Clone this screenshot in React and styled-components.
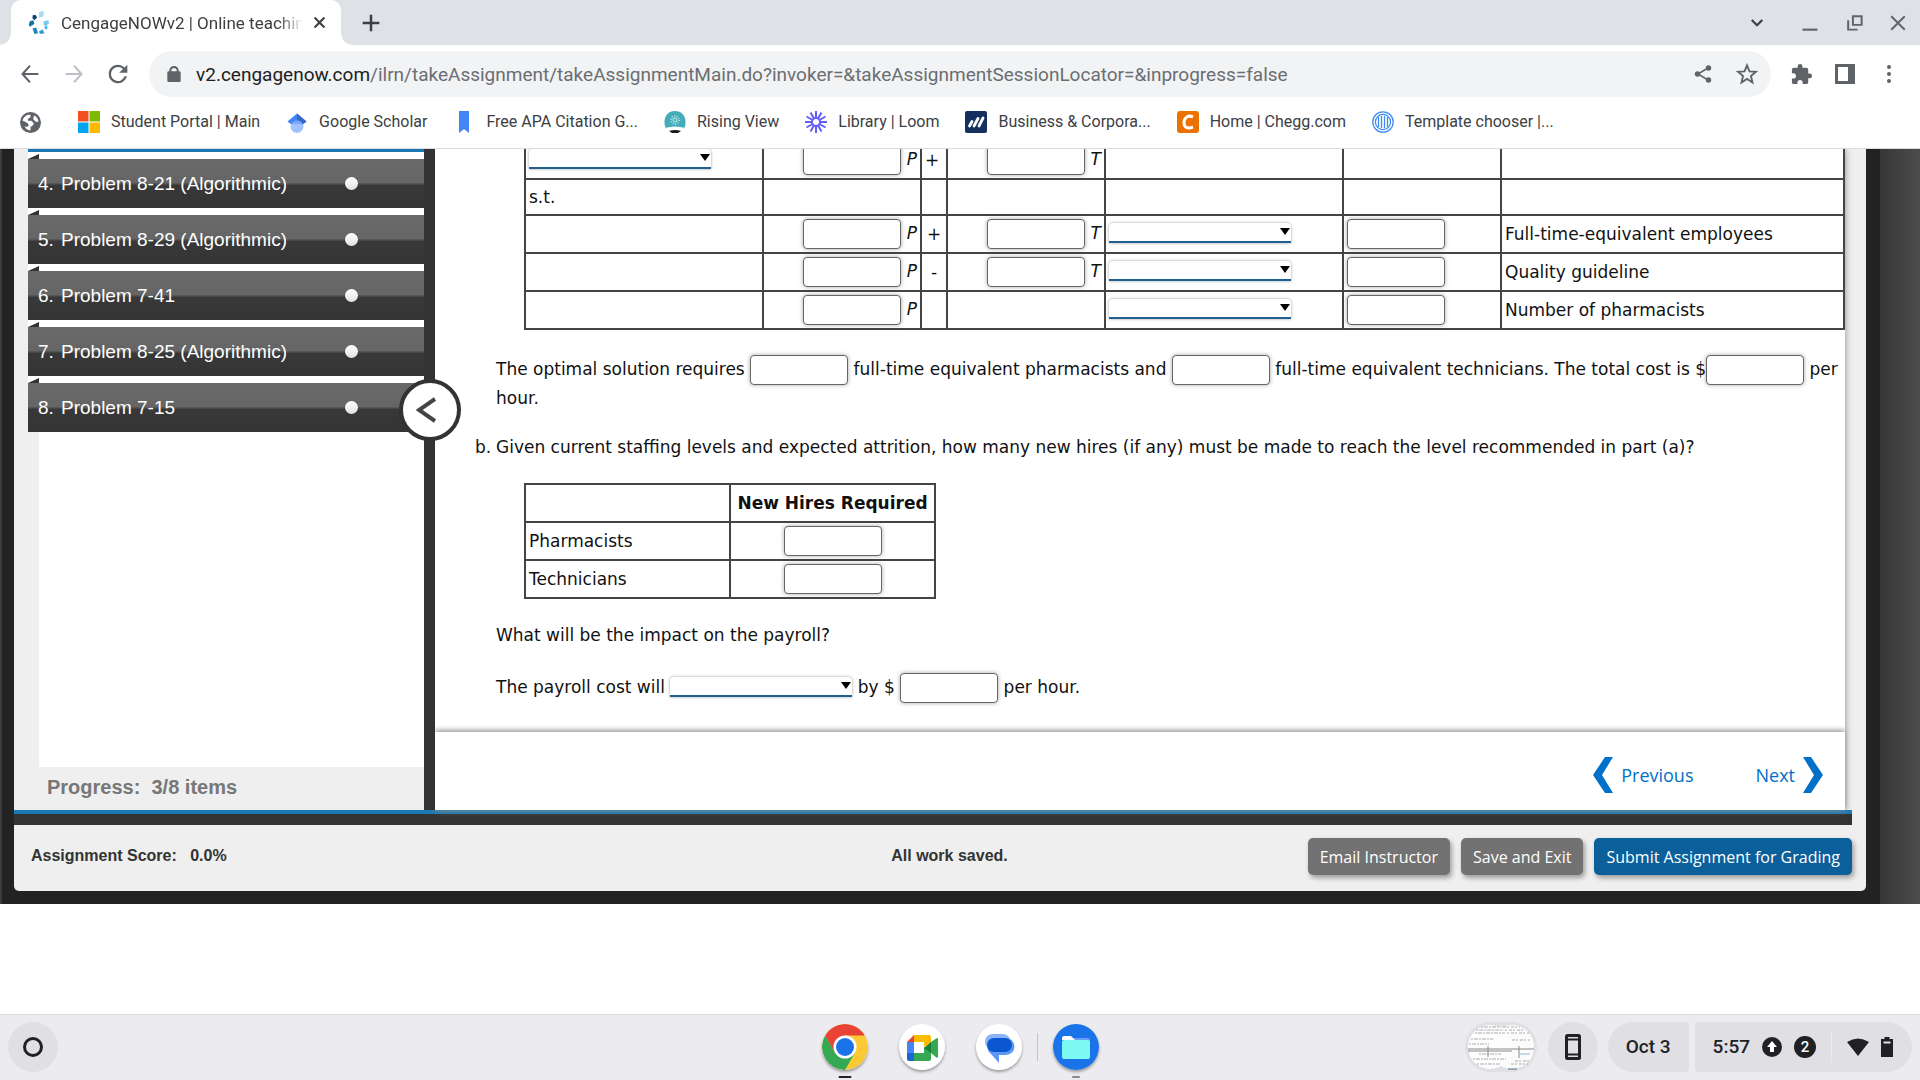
import React from 'react'
import styled, { createGlobalStyle } from 'styled-components'

const GlobalStyle = createGlobalStyle`
  * { box-sizing: border-box; }
  body { margin: 0; background: #fff; font-family: "DejaVu Sans", Verdana, sans-serif; }
  button { border: 0; padding: 0; background: none; font: inherit; color: inherit; }
  a { color: inherit; text-decoration: none; }
  svg { display: block; }
`

const Page = styled.div`
  min-height: 100vh;
  display: flex;
  flex-direction: column;
  overflow: hidden;
`

/* browser header */

const Browser = styled.header`
  position: relative;
  z-index: 5;
  background: #fff;
  border-bottom: 1px solid #dadce0;
  font-family: Roboto, sans-serif;
  color: #3c4043;
`

const TabStrip = styled.div`
  height: 45px;
  padding-left: 11px;
  background: #dee1e6;
  display: flex;
  align-items: center;
`

const Tab = styled.div`
  position: relative;
  width: 330px;
  height: 45px;
  padding: 0 14px 0 17px;
  display: flex;
  align-items: center;
  gap: 11px;
  background: #fff;
  border-radius: 10px 10px 0 0;

  svg { flex: none; }

  &::before,
  &::after {
    content: "";
    position: absolute;
    bottom: 0;
    width: 11px;
    height: 11px;
  }
  &::before {
    left: -11px;
    background: radial-gradient(circle at 0 0, #dee1e6 10px, #fff 11px);
  }
  &::after {
    right: -11px;
    background: radial-gradient(circle at 100% 0, #dee1e6 10px, #fff 11px);
  }
`

const TabTitle = styled.span`
  flex: 1;
  min-width: 0;
  margin-right: -8px;
  white-space: nowrap;
  font-size: 17px;
  line-height: 24px;
  mask-image: linear-gradient(to right, #000 88%, transparent 98%);
`

const IconButton = styled.button`
  width: ${p => p.$w || 44}px;
  height: 44px;
  flex: none;
  display: flex;
  align-items: center;
  justify-content: center;
  color: ${p => p.$color || '#5f6368'};
`

const WindowButtons = styled.div`
  margin-left: auto;
  display: flex;
`

const Toolbar = styled.div`
  height: 58px;
  padding: 0 9px 0 8px;
  display: flex;
  align-items: center;
`

const Omnibox = styled.div`
  flex: 1;
  min-width: 0;
  height: 46px;
  margin: 0 8px 0 9px;
  padding: 0 2px 0 17px;
  display: flex;
  align-items: center;
  background: #f1f3f4;
  border-radius: 23px;
  color: #5f6368;
`

const Url = styled.div`
  flex: 1;
  min-width: 0;
  margin-left: 14px;
  padding-top: 2px;
  overflow: hidden;
  white-space: nowrap;
  font-size: 19px;
  line-height: 28px;
  color: #6b6e72;

  b {
    font-weight: 400;
    color: #202124;
  }
`

const Bookmarks = styled.nav`
  height: 45px;
  padding: 0 20px 7px;
  display: flex;
  align-items: center;
  gap: 26px;
`

const Bookmark = styled.a`
  display: flex;
  align-items: center;
  gap: 11px;
  font-size: 16px;
  line-height: 24px;
  white-space: nowrap;

  svg { flex: none; }
  &:first-child { margin-right: 11px; }
`

/* assignment page */

const Desk = styled.div`
  display: flex;
`

const Shell = styled.div`
  flex: 1;
  min-width: 0;
  padding: 0 14px 13px 12px;
  border-left: 2px solid #3a3a3a;
  background: #222;
`

const DeskEdge = styled.div`
  width: 40px;
  background: linear-gradient(to right, #363636, #4c4c4c);
`

const Panel = styled.div`
  padding-right: 14px;
  background: #efefef;
  border-radius: 0 0 5px 5px;
`

const Work = styled.div`
  display: flex;
`

const Sidebar = styled.aside`
  width: 410px;
  flex: none;
  display: flex;
  flex-direction: column;
  font-family: "Liberation Sans", Arial, sans-serif;
`

const ProblemList = styled.ul`
  list-style: none;
  margin: -1px 0 0 14px;
  padding: 0;
  border-top: 4px solid #1a79b4;
  background: #fff;
`

const Problem = styled.li`
  padding-top: 7px;
  position: relative;

  &::before {
    content: "";
    position: absolute;
    top: 2px;
    left: 0;
    width: 11px;
    height: 5px;
    background: #333;
    clip-path: polygon(0 100%, 100% 0, 100% 100%);
  }
`

const ProblemLink = styled.a`
  height: 49px;
  padding: 0 66px 0 10px;
  display: flex;
  align-items: center;
  background: linear-gradient(#6a6a6a, #656565 48%, #383838 54%, #343434);
  color: #fff;
  font-size: 19px;
`

const ProblemNumber = styled.span`
  width: 23px;
`

const Dot = styled.i`
  width: 13px;
  height: 13px;
  margin-left: auto;
  border-radius: 50%;
  background: linear-gradient(#fff, #e2e2e2);
`

const ListFill = styled.div`
  flex: 1;
  margin-left: 25px;
  background: #fff;
`

const Progress = styled.div`
  height: 43px;
  padding-left: 33px;
  font-size: 20px;
  font-weight: bold;
  line-height: 40px;
  color: #777;
  white-space: pre;
`

const Divider = styled.div`
  position: relative;
  z-index: 2;
  width: 11px;
  flex: none;
  background: #333;
`

const Collapse = styled.button`
  && {
    position: absolute;
    top: 230px;
    left: -25px;
    width: 62px;
    height: 62px;
    padding-right: 8px;
    display: flex;
    align-items: center;
    justify-content: center;
    border: 4px solid #333;
    border-radius: 50%;
    background: #fff;
  }
`

const Main = styled.main`
  flex: 1;
  min-width: 0;
  margin-right: 7px;
  background: #fff;
  box-shadow: 0 0 7px #888;
  font-size: 17px;
  line-height: 27px;
  color: #111;
`

const Question = styled.div`
  padding: 0 0 29px 61px;
`

const Text = styled.p`
  margin: 0;
  padding: ${p => p.$pad || '0'};
`

const Part = styled.div`
  display: flex;
  margin-left: -21px;
  padding: 22px 0;
`

const PartLabel = styled.span`
  width: 21px;
`

const Grid = styled.table`
  border-collapse: collapse;
  table-layout: fixed;

  td, th {
    height: 38px;
    padding: 0 3px;
    border: 2px solid #444;
    text-align: left;
    white-space: nowrap;
  }
  th { text-align: center; }
`

const ModelTable = styled(Grid)`
  width: calc(100% - 28px);
  margin: -9px 0 0 28px;
`

const SubjectToRow = styled.tr`
  && td { height: 36px; }
`

const HiresTable = styled(Grid)`
  width: 412px;
  margin: 0 0 0 28px;
`

const Cell = styled.td`
  && { text-align: ${p => p.$align || 'left'}; }
`

const Col = styled.col`
  width: ${p => p.$w}px;
`

const Blank = styled.input`
  width: 98px;
  height: 30px;
  margin: 0;
  vertical-align: middle;
  border: 1px solid #666;
  border-radius: 4px;
  background: #fff;
  box-shadow: 0 0 4px rgba(0, 0, 0, 0.35);
`

const SelectBox = styled.span`
  position: relative;
  display: inline-block;
  vertical-align: middle;
  height: 20px;
  margin-bottom: 3px;

  svg {
    position: absolute;
    right: 1px;
    top: 5px;
    pointer-events: none;
  }
`

const Select = styled.select`
  appearance: none;
  display: block;
  width: 182px;
  height: 20px;
  border: 0;
  border-bottom: 2px solid #1f6091;
  border-radius: 4px 4px 0 0;
  background: #fff;
  box-shadow: 0 0 3px rgba(0, 0, 0, 0.4);
`

const Pager = styled.nav`
  height: 78px;
  padding: 8px 22px 0;
  display: flex;
  align-items: center;
  justify-content: flex-end;
  gap: 62px;
  box-shadow: 0 -2px 5px #999;
  font-family: "Open Sans", sans-serif;
  font-size: 18px;
  color: #0070c9;
`

const PagerLink = styled.a`
  display: flex;
  align-items: center;
  gap: 8px;
`

const BottomBar = styled.div`
  height: 15px;
  border-top: 4px solid #1a79b4;
  background: #333;
`

const Footer = styled.footer`
  height: 66px;
  padding-left: 17px;
  display: grid;
  grid-template-columns: 1fr auto 1fr;
  align-items: center;
  font: bold 16px/20px "Liberation Sans", Arial, sans-serif;
  color: #333;
`

const Score = styled.span`
  white-space: pre;
  padding-bottom: 5px;
`

const SaveStatus = styled(Score)`
  padding-left: 16px;
`

const Actions = styled.div`
  display: flex;
  justify-content: flex-end;
  gap: 11px;
  padding-bottom: 3px;
`

const ActionButton = styled.button`
  && {
    height: 37px;
    padding: 0 12px;
    border-radius: 5px;
    background: ${p => (p.$primary ? '#0b5f9b' : '#727272')};
    color: #fff;
    font: 16px "Open Sans", sans-serif;
    box-shadow: 2px 3px 5px rgba(0, 0, 0, 0.35);
    white-space: nowrap;
  }
`

/* system shelf */

const Shelf = styled.footer`
  position: relative;
  margin-top: auto;
  height: 66px;
  padding: 0 8px 2px;
  display: flex;
  align-items: center;
  justify-content: space-between;
  border-top: 1px solid #dcdbdf;
  background: #ecebef;
  font-family: Roboto, sans-serif;
`

const RoundButton = styled.button`
  && {
    width: 50px;
    height: 50px;
    display: flex;
    align-items: center;
    justify-content: center;
    border-radius: 50%;
    background: #e0dfe4;
  }
`

const Apps = styled.div`
  display: flex;
  align-items: center;
  gap: 31px;
`

const ShelfSide = styled.div`
  flex: 1;
  display: flex;
  align-items: center;
  justify-content: ${p => (p.$end ? 'flex-end' : 'flex-start')};
  gap: 6px;
`

const AppButton = styled.button`
  position: relative;
  width: 46px;
  height: 46px;

  svg {
    border-radius: 50%;
    box-shadow: 0 2px 3px rgba(0, 0, 0, 0.35);
  }

  &::after {
    content: "";
    display: ${p => (p.$mark ? 'block' : 'none')};
    position: absolute;
    top: 52px;
    left: 50%;
    width: ${p => (p.$mark === 'active' ? 13 : 8)}px;
    height: 2px;
    transform: translateX(-50%);
    border-radius: 1px;
    background: ${p => (p.$mark === 'active' ? '#202124' : '#8a8a8d')};
  }
`

const AppsRule = styled.i`
  width: 1px;
  height: 28px;
  margin: 0 -16px;
  background: #c5c4c9;
`

const TrayButton = styled.button`
  && {
    height: 50px;
    display: flex;
    align-items: center;
    gap: 12px;
    padding: ${p => p.$pad};
    margin-left: ${p => p.$gap || 0}px;
    border-radius: ${p => p.$radius};
    background: #e0dfe4;
    color: #202124;
    font-size: 19px;
    font-weight: 500;
  }
`

const TrayRule = styled.i`
  width: 1px;
  height: 30px;
  margin: 0 3px;
  background: #eceaf0;
`

const Badge = styled.span`
  width: 22px;
  height: 22px;
  border-radius: 50%;
  background: #202124;
  color: #fff;
  font-size: 15px;
  line-height: 22px;
  text-align: center;
`

const Stroke = ({ d, size = 24, w = 2, color = 'currentColor' }) => (
  <svg width={size} height={size} viewBox="0 0 24 24" fill="none" stroke={color} strokeWidth={w}>
    <path d={d} />
  </svg>
)

const Solid = ({ d, size = 24 }) => (
  <svg width={size} height={size} viewBox="0 0 24 24" fill="currentColor">
    <path d={d} />
  </svg>
)

const CengageIcon = () => (
  <svg width="22" height="24" viewBox="0 0 22 26">
    <path d="M11 1l5-1v6l-5 1z" fill="#a8dcf0" />
    <path d="M4 5l3-1 2 3-3 3-2-2z" fill="#0b3f73" />
    <path d="M0 15l1-4 4-1 1 4-5 3z" fill="#1273a8" />
    <path d="M4 19l4-1 2 6-4 1z" fill="#1d86bd" />
    <path d="M11 22l4-2 2 4-5 1z" fill="#2e9ed2" />
    <path d="M16 11l5-1 1 3-4 4-2-2z" fill="#7bcbea" />
    <path d="M17 17l3-1v4l-3-1z" fill="#48b0dd" />
  </svg>
)

const GlobeIcon = () => (
  <svg width="21" height="21" viewBox="0 0 24 24">
    <circle cx="12" cy="12" r="12" fill="#5f6368" />
    <path d="M3 10c0-3 3-6 6-7h3v3l-3 2v2h4l3 3-2 3-2 1v4c-3 0-6-2-7-5l2 1 3-1-1-3-3-2z" fill="#fff" />
    <path d="M16 4c3 1 5 4 5 7h-3l-3-3z" fill="#fff" />
  </svg>
)

const MicrosoftIcon = () => (
  <svg width="22" height="22" viewBox="0 0 22 22">
    <path d="M0 0h10.5v10.5H0z" fill="#f25022" />
    <path d="M11.500 0H22v10.500H11.500z" fill="#7fba00" />
    <path d="M0 11.500h10.500V22H0z" fill="#00a4ef" />
    <path d="M11.500 11.500H22V22H11.500z" fill="#ffb900" />
  </svg>
)

const ScholarIcon = () => (
  <svg width="22" height="22" viewBox="0 0 22 22">
    <circle cx="11" cy="15.500" r="6.500" fill="#a0c3ff" />
    <path d="M11 2.500L1.500 10.500l4 3a6.500 6.500 0 0 1 11 0l4-3z" fill="#4285f4" />
    <path d="M11 2.500l9.500 8-4 3A6.500 6.500 0 0 0 11 9.500z" fill="#356ac3" />
    <path d="M5.200 13a6.500 6.500 0 0 1 11.600 0z" fill="#76a7fa" />
  </svg>
)

const RibbonIcon = () => (
  <svg width="22" height="22" viewBox="0 0 22 22">
    <path d="M6 0h10v22l-5-4-5 4z" fill="#4285f4" />
  </svg>
)

const RisingIcon = () => (
  <svg width="22" height="22" viewBox="0 0 22 22">
    <path d="M2 18C-2 9 2 0 11 0s13 9 9 18z" fill="#45adb9" />
    <path d="M1 17q10-3 20 0l-4 5H5z" fill="#fff" />
    <path d="M5 20q6-2 12 0l-3 2H8z" fill="#181818" />
    <circle cx="11" cy="9" r="4" fill="none" stroke="#c9edf1" strokeDasharray="1 1.500" strokeWidth="1.500" />
    <circle cx="11" cy="9" r="2" fill="none" stroke="#c9edf1" />
  </svg>
)

const LoomIcon = () => (
  <svg width="22" height="22" viewBox="0 0 22 22" stroke="#625df5" strokeWidth="2">
    {[0, 30, 60, 90, 120, 150, 180, 210, 240, 270, 300, 330].map(a => (
      <path key={a} d="M11 0v7.500" transform={`rotate(${a} 11 11)`} />
    ))}
    <circle cx="11" cy="11" r="4" fill="#fff" />
  </svg>
)

const BusinessIcon = () => (
  <svg width="22" height="22" viewBox="0 0 22 22">
    <rect width="22" height="22" rx="2" fill="#15305e" />
    <path d="M4.500 15l2.500-4.500M9 15l4-7.500M14 15l4-8" stroke="#fff" strokeWidth="2.800" strokeLinecap="round" />
  </svg>
)

const CheggIcon = () => (
  <svg width="22" height="22" viewBox="0 0 22 22">
    <rect width="22" height="22" rx="3" fill="#eb7100" />
    <path d="M16 6C11 3.500 7 7 7 11.500s3 7 9 4.500" fill="none" stroke="#fff" strokeWidth="3" />
  </svg>
)

const TemplateIcon = () => (
  <svg width="22" height="22" viewBox="0 0 22 22" fill="none" stroke="#3f8cf7" strokeWidth="1.300">
    <circle cx="11" cy="11" r="10.200" />
    <circle cx="11" cy="11" r="7.600" />
    <path d="M6.500 6v10M9.500 5v12M12.500 5v12M15.500 6v10" />
  </svg>
)

const Chevron = ({ flip }) => (
  <svg width="20" height="36" viewBox="0 0 20 36">
    <path d="M12 0h8L9 18l11 18h-8L0 18z" fill="#0070c9" transform={flip ? 'rotate(180 10 18)' : undefined} />
  </svg>
)

const ChromeIcon = () => (
  <svg width="46" height="46" viewBox="0 0 46 46">
    <circle cx="23" cy="23" r="23" fill="#fbc934" />
    <path d="M3.100 11.500A23 23 0 0 1 42.900 11.500H23L13 29z" fill="#ea4335" />
    <path d="M3.100 11.500A23 23 0 0 0 23 46L33 28.700 23 34 13 28.700z" fill="#34a853" />
    <circle cx="23" cy="23" r="11.500" fill="#fff" />
    <circle cx="23" cy="23" r="9" fill="#1a73e8" />
  </svg>
)

const MeetIcon = () => (
  <svg width="46" height="46" viewBox="0 0 46 46">
    <rect width="46" height="46" fill="#fff" />
    <path d="M8 18l7-7v7z" fill="#ea4335" />
    <path d="M15 11h15q2 0 2 2v6l-7 4v-5H15z" fill="#fbbc04" />
    <path d="M8 18h7v11H8z" fill="#4285f4" />
    <path d="M8 29h7v8h-5q-2 0-2-2z" fill="#1967d2" />
    <path d="M15 29h10v-6l7 5v7q0 2-2 2H15zM32 18l6-4q1 0 1 1v18l-1 1-6-5z" fill="#34a853" />
    <path d="M25 24l7-6v11z" fill="#188038" />
  </svg>
)

const MessagesIcon = () => (
  <svg width="46" height="46" viewBox="0 0 46 46">
    <rect width="46" height="46" fill="#fff" />
    <path d="M16 10h11a8 8 0 0 1 7 5v10H17a7.500 7.500 0 0 1-1-15z" fill="#8ab4f8" />
    <path d="M19 14h11a8.500 8.500 0 0 1 0 17h-7v8l-8-9a9 9 0 0 1 4-16z" fill="#5e97f6" />
    <rect x="11" y="14" width="25" height="14" rx="7" fill="#0b57d0" />
  </svg>
)

const FilesIcon = () => (
  <svg width="46" height="46" viewBox="0 0 46 46">
    <rect width="46" height="46" fill="#1a73e8" />
    <path d="M20 14h15q2 0 2 2v4H20z" fill="#669df6" />
    <path d="M9 17V14q0-2 2-2h7l4 4H9z" fill="#fff" />
    <rect x="9" y="16" width="28" height="19" rx="2" fill="#7df9f3" />
  </svg>
)

const Thumbs = () => (
  <svg width="72" height="50" viewBox="0 0 72 50">
    <rect width="72" height="50" rx="25" fill="#e0dfe4" />
    <circle cx="47" cy="25" r="22" fill="#fbfbfb" />
    <g stroke="#aaa" strokeDasharray="3 1 2 2">
      <path d="M38 5h17M36 8h24M38 11h26M50 39h16M46 42h17" />
      <path d="M47 18h18" />
      <path d="M55 32h10" stroke="#8fb8d6" strokeDasharray="none" />
      <path d="M43 47h9" stroke="#4a6f8c" strokeDasharray="none" />
    </g>
    <circle cx="25" cy="25" r="22" fill="#fdfdfd" />
    <g stroke="#aaa" strokeDasharray="2 1 4 1">
      <path d="M16 5h18M11 8h26M10 11h30M6 17h22M4 22h20M14 32h22M8 37h33M12 42h24" />
    </g>
    <path d="M3 27h66M3 29h44M23 24v11M54 24v12" stroke="#888" />
  </svg>
)

const bookmarks = [
  ['Student Portal | Main', MicrosoftIcon],
  ['Google Scholar', ScholarIcon],
  ['Free APA Citation G...', RibbonIcon],
  ['Rising View', RisingIcon],
  ['Library | Loom', LoomIcon],
  ['Business & Corpora...', BusinessIcon],
  ['Home | Chegg.com', CheggIcon],
  ['Template chooser |...', TemplateIcon],
]

const problems = [
  [4, 'Problem 8-21 (Algorithmic)'],
  [5, 'Problem 8-29 (Algorithmic)'],
  [6, 'Problem 7-41'],
  [7, 'Problem 8-25 (Algorithmic)'],
  [8, 'Problem 7-15'],
]

const constraints = [
  { sign: '+', t: true, name: 'Full-time-equivalent employees' },
  { sign: '-', t: true, name: 'Quality guideline' },
  { sign: '', t: false, name: 'Number of pharmacists' },
]

function Dropdown({ label }) {
  return (
    <SelectBox>
      <Select aria-label={label} defaultValue="">
        <option value=""></option>
      </Select>
      <svg width="10" height="7" viewBox="0 0 10 7"><path d="M0 0h10L5 7z" /></svg>
    </SelectBox>
  )
}

function BrowserHeader() {
  return (
    <Browser>
      <TabStrip>
        <Tab>
          <CengageIcon />
          <TabTitle>CengageNOWv2 | Online teaching</TabTitle>
          <IconButton $w={16} $color="#3c4043" aria-label="Close tab"><Stroke d="M5 5l14 14M19 5L5 19" size={17} w={3} /></IconButton>
        </Tab>
        <IconButton $w={60} $color="#3c4043" aria-label="New tab"><Stroke d="M12 2v20M2 12h20" size={20} w={3} /></IconButton>
        <WindowButtons>
          <IconButton $w={62} $color="#3c4043" aria-label="Search tabs"><Stroke d="M5 8l7 7 7-7" size={18} w={3} /></IconButton>
          <IconButton aria-label="Minimize"><Stroke d="M3 20h18" size={20} w={2.5} /></IconButton>
          <IconButton aria-label="Restore"><Stroke d="M10 4h11v11H10zM4 9v12h12" size={19} w={2.5} /></IconButton>
          <IconButton aria-label="Close"><Stroke d="M3 3l18 18M21 3L3 21" size={18} w={2.5} /></IconButton>
        </WindowButtons>
      </TabStrip>
      <Toolbar>
        <IconButton aria-label="Back"><Stroke d="M22 12H3M12 2L3 12l9 10" size={20} w={2.5} /></IconButton>
        <IconButton $color="#bdc1c6" aria-label="Forward"><Stroke d="M2 12h19M12 2l9 10-9 10" size={20} w={2.5} /></IconButton>
        <IconButton aria-label="Reload"><Solid size={28} d="M17.650 6.350A7.960 7.960 0 0 0 12 4a8 8 0 1 0 7.730 10h-2.080A6 6 0 1 1 12 6c1.660 0 3.140.690 4.220 1.780L13 11h7V4z" /></IconButton>
        <Omnibox>
          <Solid size={16} d="M20 8h-1V6.500C19 3 16 0 12 0S5 3 5 6.500V8H4q-2 0-2 2v12q0 2 2 2h16q2 0 2-2V10q0-2-2-2zM8 6.500C8 4.500 9.500 3 12 3s4 1.500 4 3.500V8H8z" />
          <Url><b>v2.cengagenow.com</b>/ilrn/takeAssignment/takeAssignmentMain.do?invoker=&amp;takeAssignmentSessionLocator=&amp;inprogress=false</Url>
          <IconButton aria-label="Share">
            <svg width="18" height="18" viewBox="0 0 18 18" fill="currentColor">
              <path d="M14 3L4 9l10 6" fill="none" stroke="currentColor" strokeWidth="1.500" />
              <circle cx="14.500" cy="3" r="2.700" /><circle cx="3.500" cy="9" r="2.700" /><circle cx="14.500" cy="15" r="2.700" />
            </svg>
          </IconButton>
          <IconButton aria-label="Bookmark this page"><Stroke d="M12 2.500l2.700 6.600 7 .500-5.400 4.600 1.700 7-6-3.800-6 3.800 1.700-7-5.400-4.600 7-.500z" size={22} /></IconButton>
        </Omnibox>
        <IconButton aria-label="Extensions"><Solid size={23} d="M20.500 11H19V7a2 2 0 0 0-2-2h-4V3.500a2.500 2.500 0 0 0-5 0V5H4a2 2 0 0 0-2 2v3.800h1.500a2.700 2.700 0 0 1 0 5.400H2V20a2 2 0 0 0 2 2h3.800v-1.500a2.700 2.700 0 0 1 5.400 0V22H17a2 2 0 0 0 2-2v-4h1.500a2.500 2.500 0 0 0 0-5z" /></IconButton>
        <IconButton aria-label="Side panel">
          <svg width="20" height="20" viewBox="0 0 20 20"><path d="M0 0h20v20H0zM3 3v14h10V3z" fill="#5f6368" fillRule="evenodd" /></svg>
        </IconButton>
        <IconButton aria-label="Menu">
          <svg width="6" height="20" viewBox="0 0 6 20" fill="#5f6368"><circle cx="3" cy="3" r="2" /><circle cx="3" cy="10" r="2" /><circle cx="3" cy="17" r="2" /></svg>
        </IconButton>
      </Toolbar>
      <Bookmarks>
        <Bookmark href="#apps" aria-label="Globe"><GlobeIcon /></Bookmark>
        {bookmarks.map(([title, Icon]) => (
          <Bookmark href="#bookmark" key={title}><Icon />{title}</Bookmark>
        ))}
      </Bookmarks>
    </Browser>
  )
}

function ModelGrid() {
  return (
    <ModelTable>
      <colgroup>
        <Col $w={238} /><Col $w={158} /><Col $w={26} /><Col $w={158} /><Col $w={238} /><Col $w={158} /><col />
      </colgroup>
      <tbody>
        <tr>
          <Cell><Dropdown label="Objective" /></Cell>
          <Cell $align="right"><Blank aria-label="Objective P" /> <i>P</i></Cell>
          <Cell>+</Cell>
          <Cell $align="right"><Blank aria-label="Objective T" /> <i>T</i></Cell>
          <td></td><td></td><td></td>
        </tr>
        <SubjectToRow>
          <td>s.t.</td><td></td><td></td><td></td><td></td><td></td><td></td>
        </SubjectToRow>
        {constraints.map(c => (
          <tr key={c.name}>
            <td></td>
            <Cell $align="right"><Blank aria-label={`${c.name} P`} /> <i>P</i></Cell>
            <Cell $align="center">{c.sign}</Cell>
            <Cell $align="right">{c.t && <><Blank aria-label={`${c.name} T`} /> <i>T</i></>}</Cell>
            <td><Dropdown label={`${c.name} relation`} /></td>
            <td><Blank aria-label={`${c.name} value`} /></td>
            <td>{c.name}</td>
          </tr>
        ))}
      </tbody>
    </ModelTable>
  )
}

function HiresGrid() {
  return (
    <HiresTable>
      <tbody>
        <tr><td></td><th>New Hires Required</th></tr>
        {['Pharmacists', 'Technicians'].map(name => (
          <tr key={name}>
            <td>{name}</td>
            <Cell $align="center"><Blank aria-label={`${name} new hires`} /></Cell>
          </tr>
        ))}
      </tbody>
    </HiresTable>
  )
}

function Assignment() {
  return (
    <Desk>
      <Shell>
        <Panel>
          <Work>
            <Sidebar>
              <ProblemList>
                {problems.map(([n, title]) => (
                  <Problem key={n}>
                    <ProblemLink href="#problem"><ProblemNumber>{n}.</ProblemNumber>{title}<Dot /></ProblemLink>
                  </Problem>
                ))}
              </ProblemList>
              <ListFill />
              <Progress>{'Progress:  3/8 items'}</Progress>
            </Sidebar>
            <Divider>
              <Collapse aria-label="Collapse list">
                <svg width="20" height="26" viewBox="0 0 20 26" fill="none" stroke="#444" strokeWidth="4"><path d="M19 2L3 13l16 11" /></svg>
              </Collapse>
            </Divider>
            <Main>
              <Question>
                <ModelGrid />
                <Text $pad="25px 0 0">
                  The optimal solution requires <Blank aria-label="Pharmacists" /> full-time equivalent pharmacists and <Blank aria-label="Technicians" /> full-time equivalent technicians. The total cost is $<Blank aria-label="Total cost" /> per hour.
                </Text>
                <Part>
                  <PartLabel>b.</PartLabel>
                  <Text>Given current staffing levels and expected attrition, how many new hires (if any) must be made to reach the level recommended in part (a)?</Text>
                </Part>
                <HiresGrid />
                <Text $pad="23px 0 24px">What will be the impact on the payroll?</Text>
                <Text>The payroll cost will <Dropdown label="Payroll change" /> by $ <Blank aria-label="Payroll amount" /> per hour.</Text>
              </Question>
              <Pager>
                <PagerLink href="#previous"><Chevron />Previous</PagerLink>
                <PagerLink href="#next">Next<Chevron flip /></PagerLink>
              </Pager>
            </Main>
          </Work>
          <BottomBar />
          <Footer>
            <Score>{'Assignment Score:   0.0%'}</Score>
            <SaveStatus>All work saved.</SaveStatus>
            <Actions>
              <ActionButton>Email Instructor</ActionButton>
              <ActionButton>Save and Exit</ActionButton>
              <ActionButton $primary>Submit Assignment for Grading</ActionButton>
            </Actions>
          </Footer>
        </Panel>
      </Shell>
      <DeskEdge />
    </Desk>
  )
}

function SystemShelf() {
  return (
    <Shelf>
      <ShelfSide>
        <RoundButton aria-label="Launcher">
          <svg width="20" height="20" viewBox="0 0 20 20"><circle cx="10" cy="10" r="8.500" fill="none" stroke="#202124" strokeWidth="3" /></svg>
        </RoundButton>
      </ShelfSide>
      <Apps>
        <AppButton $mark="active" aria-label="Chrome"><ChromeIcon /></AppButton>
        <AppButton aria-label="Meet"><MeetIcon /></AppButton>
        <AppButton aria-label="Messages"><MessagesIcon /></AppButton>
        <AppsRule />
        <AppButton $mark="open" aria-label="Files"><FilesIcon /></AppButton>
      </Apps>
      <ShelfSide $end>
        <Thumbs />
        <TrayButton $pad="0 15px" $gap={5} $radius="25px" aria-label="Phone Hub">
          <svg width="20" height="26" viewBox="0 0 20 26" fill="none" stroke="#202124"><rect x="3.500" y="1.500" width="13" height="23" rx="1" strokeWidth="3" /><path d="M4 5.500h12M4 20.500h12" strokeWidth="2" /></svg>
        </TrayButton>
        <TrayButton $pad="0 18px" $gap={4} $radius="25px 4px 4px 25px">Oct 3</TrayButton>
        <TrayButton $pad="0 19px 0 18px" $radius="4px 25px 25px 4px">
          5:57
          <svg width="20" height="20" viewBox="0 0 20 20"><circle cx="10" cy="10" r="10" fill="#202124" /><path d="M10 4l5 6h-3v5H8v-5H5z" fill="#fff" /></svg>
          <Badge>2</Badge>
          <TrayRule />
          <svg width="22" height="18" viewBox="0 0 22 18"><path d="M0 4Q11-3 22 4L11 18z" fill="#202124" /></svg>
          <svg width="12" height="20" viewBox="0 0 12 20"><path d="M3.500 0h5v2H12v18H0V2h3.500zM2.500 4.500v2h7v-2z" fill="#202124" fillRule="evenodd" /></svg>
        </TrayButton>
      </ShelfSide>
    </Shelf>
  )
}

export default function App() {
  return (
    <Page>
      <GlobalStyle />
      <BrowserHeader />
      <Assignment />
      <SystemShelf />
    </Page>
  )
}
